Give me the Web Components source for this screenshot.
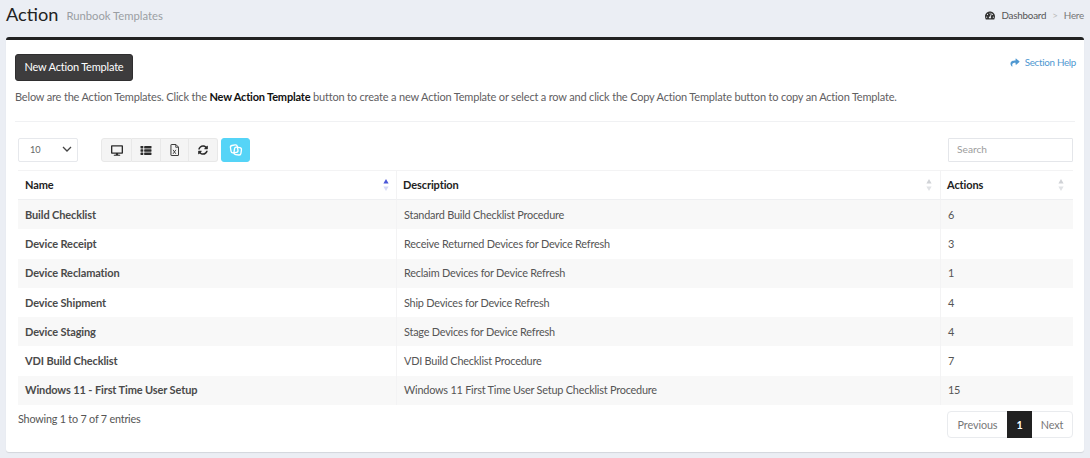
<!DOCTYPE html>
<html lang="en"><head><meta charset="utf-8"><title>Action</title>
<style>
html,body{margin:0;padding:0;height:458px;overflow:hidden}
body{background:#ebeef4;font:11px/17px Lato,"Noto Sans",sans-serif;color:#444}
</style></head><body>
<page-header></page-header>
<app-card>
  <card-intro></card-intro>
  <dt-toolbar></dt-toolbar>
  <data-table></data-table>
  <dt-footer></dt-footer>
</app-card>
<script>
const icons={
 desktop:['0 0 576 512','<path d="M528 0H48C21.5 0 0 21.5 0 48v320c0 26.5 21.5 48 48 48h192l-16 48h-72c-13.3 0-24 10.7-24 24s10.7 24 24 24h272c13.3 0 24-10.7 24-24s-10.7-24-24-24h-72l-16-48h192c26.5 0 48-21.5 48-48V48c0-26.5-21.5-48-48-48zm-16 352H64V64h448v288z"/>'],
 list:['0 0 512 512','<rect x="0" y="50" width="130" height="112" rx="22"/><rect x="170" y="50" width="342" height="112" rx="22"/><rect x="0" y="200" width="130" height="112" rx="22"/><rect x="170" y="200" width="342" height="112" rx="22"/><rect x="0" y="350" width="130" height="112" rx="22"/><rect x="170" y="350" width="342" height="112" rx="22"/>'],
 excel:['0 0 384 512','<path fill="none" stroke="currentColor" stroke-width="40" stroke-linejoin="round" d="M40 40a20 20 0 0 1 20-20h190l114 114v338a20 20 0 0 1-20 20H60a20 20 0 0 1-20-20z"/><path fill="none" stroke="currentColor" stroke-width="34" d="M245 25v115h115"/><path fill="none" stroke="currentColor" stroke-width="36" d="M130 250l120 170M250 250l-120 170"/>'],
 sync:['0 0 512 512','<path d="M370.72 133.28C339.458 104.008 298.888 87.962 255.848 88c-77.458.068-144.328 53.178-162.791 126.85-1.344 5.363-6.122 9.15-11.651 9.15H24.103c-7.498 0-13.194-6.807-11.807-14.176C33.933 94.924 134.813 8 256 8c66.448 0 126.791 26.136 171.315 68.685L463.03 40.97C478.149 25.851 504 36.559 504 57.941V192c0 13.255-10.745 24-24 24H345.941c-21.382 0-32.09-25.851-16.971-40.971l41.75-41.749zM32 296h134.059c21.382 0 32.09 25.851 16.971 40.971l-41.75 41.75c31.262 29.273 71.835 45.319 114.876 45.28 77.418-.07 144.315-53.144 162.787-126.849 1.344-5.363 6.122-9.15 11.651-9.15h57.304c7.498 0 13.194 6.807 11.807 14.176C478.067 417.076 377.187 504 256 504c-66.448 0-126.791-26.136-171.315-68.685L48.97 471.03C33.851 486.149 8 475.441 8 454.059V320c0-13.255 10.745-24 24-24z"/>'],
 copy:['0 0 16 16','<g fill="none" stroke="currentColor" stroke-width="1.5" stroke-linejoin="round"><rect x="2" y="2.5" width="8" height="8.5" rx="2.2" transform="rotate(-10 6 7)"/><rect x="6" y="5" width="8" height="8.5" rx="2.2" transform="rotate(8 10 9)"/></g>'],
 gauge:['0 0 576 512','<path d="M288 32C128.94 32 0 160.94 0 320c0 52.8 14.25 102.26 39.06 144.8 5.61 9.62 16.3 15.2 27.44 15.2h443c11.14 0 21.83-5.58 27.44-15.2C561.75 422.26 576 372.8 576 320c0-159.06-128.94-288-288-288zm0 64c14.71 0 26.58 10.13 30.32 23.65-1.11 2.26-2.64 4.23-3.45 6.67l-9.22 27.67c-5.13 3.49-10.97 6.01-17.64 6.01-17.67 0-32-14.33-32-32S270.33 96 288 96zM96 384c-17.67 0-32-14.33-32-32s14.33-32 32-32 32 14.33 32 32-14.33 32-32 32zm48-160c-17.67 0-32-14.33-32-32s14.33-32 32-32 32 14.33 32 32-14.33 32-32 32zm246.77-72.41l-61.33 184C343.13 347.33 352 364.54 352 384c0 11.72-3.38 22.55-8.88 32H232.88c-5.5-9.45-8.88-20.28-8.88-32 0-33.94 26.5-61.43 59.9-63.59l61.34-184.01c4.17-12.56 17.73-19.45 30.36-15.17 12.57 4.19 19.35 17.79 15.17 30.36zm14.66 57.2l15.52-46.55c3.47-1.29 7.13-2.23 11.05-2.23 17.67 0 32 14.33 32 32s-14.33 32-32 32c-11.38-.01-20.89-6.28-26.57-15.22zM480 384c-17.67 0-32-14.33-32-32s14.33-32 32-32 32 14.33 32 32-14.33 32-32 32z"/>'],
 share:['0 0 512 512','<path d="M503.691 189.836L327.687 37.851C312.281 24.546 288 35.347 288 56.015v80.053C127.371 137.907 0 170.1 0 322.326c0 61.441 39.581 122.309 83.333 154.132 13.653 9.931 33.111-2.533 28.077-18.631C66.066 312.814 132.917 274.316 288 272.085V360c0 20.7 24.3 31.453 39.687 18.164l176.004-152c11.071-9.562 11.086-26.753 0-36.328z"/>']
};
const svg=(n,w,h)=>`<svg xmlns="http://www.w3.org/2000/svg" viewBox="${icons[n][0]}" width="${w}" height="${h}" fill="currentColor" aria-hidden="true">${icons[n][1]}</svg>`;
function el(name,html){customElements.define(name,class extends HTMLElement{constructor(){super();this.attachShadow({mode:'open'}).innerHTML=html}})}

el('page-header',`<style>
:host{display:flex;align-items:center;height:37px;padding:0 6px 7px 6px;box-sizing:border-box}
h1{margin:0 0 3px;font-size:18.2px;font-weight:400;line-height:28px;color:#222}
small{font-size:11.25px;color:#9a9ea3;margin-left:8px}
nav{margin-left:auto;display:flex;align-items:center;font-size:9.8px;letter-spacing:-.2px;color:#555}
svg{margin-right:6px;color:#333}
i{font-style:normal;color:#bbb;margin:0 6px}
span.h{color:#777}
</style><h1>Action</h1><small>Runbook Templates</small><nav>${svg('gauge',10,9)}<span>Dashboard</span><i>&gt;</i><span class="h">Here</span></nav>`);

el('app-card',`<style>
:host{display:block;margin:0 6px;height:415px;box-sizing:border-box;background:#fff;border-top:3px solid #222;border-radius:3px;padding:14px 9px 0;box-shadow:0 1px 1px rgba(0,0,0,.1)}
</style><slot></slot>`);

el('card-intro',`<style>
:host{display:block;border-bottom:1px solid #f0f1f3;height:68px;box-sizing:border-box}
.top{display:flex;align-items:center;justify-content:space-between}
button{font:inherit;font-size:11px;letter-spacing:-.2px;color:#fff;background:#3d3c3d;border:1px solid #2f2e2f;border-radius:3px;height:27px;width:118px;padding:0 0 2px}
a{display:flex;align-items:center;font-size:9.8px;letter-spacing:-.3px;color:#4f98d1;margin:-10px -1px 0 0}
a svg{margin-right:5px}
p{margin:7px 0 0;font-size:11px;letter-spacing:-.18px;line-height:17px;color:#5f6062;white-space:nowrap}
b{color:#111}
</style><div class="top"><button>New Action Template</button><a>${svg('share',10,9)}<span>Section Help</span></a></div>
<p>Below are the Action Templates. Click the <b>New Action Template</b> button to create a new Action Template or select a row and click the Copy Action Template button to copy an Action Template.</p>`);

el('dt-toolbar',`<style>
:host{display:flex;align-items:center;height:24px;margin:16px 2px 0 3px}
.sel{width:60px;height:24px;box-sizing:border-box;border:1px solid #e6e8ec;border-radius:2px;display:flex;align-items:center;justify-content:space-between;padding:0 5px 2px 11px;font-size:9.2px;color:#666}
.grp{display:flex;margin-left:23px}
.b{width:29px;height:24px;box-sizing:border-box;background:#f4f4f4;border:1px solid #e8e8e8;border-left-width:0;display:flex;align-items:center;justify-content:center;color:#2b2b2b}
.b:first-child{border-left-width:1px;border-radius:3px 0 0 3px;width:31px}
.b:nth-child(3){width:28px}
.b:nth-child(4){border-radius:0 3px 3px 0}
.on{background:#55d4f7;border-color:#55d4f7;color:#fff;border-radius:3px;margin-left:3px;width:29px;border-left-width:1px}
.s{margin-left:auto;width:125px;height:24px;box-sizing:border-box;border:1px solid #e4e6ea;font-size:10.2px;color:#9d9d9d;display:flex;align-items:center;padding:0 0 2px 8px;border-radius:1px}
</style><div class="sel"><span>10</span><svg width="10" height="6" viewBox="0 0 10 6"><path d="M1 1l4 4 4-4" fill="none" stroke="#444" stroke-width="1.3"/></svg></div>
<div class="grp"><div class="b">${svg('desktop',12,11)}</div><div class="b">${svg('list',12,11)}</div><div class="b">${svg('excel',9,12)}</div><div class="b">${svg('sync',10,10)}</div><div class="b on">${svg('copy',14,14)}</div></div>
<div class="s">Search</div>`);

const rows=[["Build Checklist","Standard Build Checklist Procedure","6"],["Device Receipt","Receive Returned Devices for Device Refresh","3"],["Device Reclamation","Reclaim Devices for Device Refresh","1"],["Device Shipment","Ship Devices for Device Refresh","4"],["Device Staging","Stage Devices for Device Refresh","4"],["VDI Build Checklist","VDI Build Checklist Procedure","7"],["Windows 11 - First Time User Setup","Windows 11 First Time User Setup Checklist Procedure","15"]];
const sort=(m,up='#d0d2d6',dn='#e0e2e5')=>`<svg style="margin-right:${m}px" width="6" height="12" viewBox="0 0 6 12"><path d="M3 0l2.6 4.6H.4z" fill="${up}"/><path d="M3 12L.4 7.4h5.2z" fill="${dn}"/></svg>`;
el('data-table',`<style>
:host{display:block;margin:8px 2px 0 3px}
.t{display:grid;grid-template-columns:378px 544px 133px;font-size:10.9px;letter-spacing:-.22px;color:#555}
.c{padding:0 7px 1px;height:29.3px;display:flex;align-items:center;box-sizing:border-box;border-left:1px solid #f3f3f4}
.c:nth-child(3n+1){border-left:0}
.h{height:30px;font-size:11px;letter-spacing:-.1px;font-weight:700;color:#222;justify-content:space-between;border-top:1px solid #f3f3f4;border-bottom:1px solid #eeeff1;padding-bottom:2px}
.h:not(:first-child) span{margin-left:-1px}
.h svg{margin-top:2px}
.r{background:#f8f8f8}
.n{font-weight:700;font-size:11px;letter-spacing:-.12px;color:#4a4a4a}
</style><div class="t" role="table">
<div class="c h"><span>Name</span>${sort(0,'#4a57d8','#d5d8f5')}</div><div class="c h"><span>Description</span>${sort(1)}</div><div class="c h"><span>Actions</span>${sort(2)}</div>
${rows.map((r,i)=>`<div class="c n ${i%2?'':'r'}">${r[0]}</div><div class="c ${i%2?'':'r'}">${r[1]}</div><div class="c ${i%2?'':'r'}">${r[2]}</div>`).join('')}
</div>`);

el('dt-footer',`<style>
:host{display:flex;justify-content:space-between;align-items:flex-start;margin:6px 2px 0 3px}
.i{font-size:10.8px;letter-spacing:-.2px;color:#555;margin-top:-1px}
.p{display:flex;height:27px;border:1px solid #e9ebee;border-radius:4px;box-sizing:border-box;font-size:10.8px;letter-spacing:-.1px;color:#777;align-items:center}
.p span{display:flex;align-items:center;justify-content:center;height:27px}
.a{width:59px}.c{width:25px;background:#212121;color:#fff;font-weight:700}.z{width:40px}
</style><div class="i">Showing 1 to 7 of 7 entries</div><div class="p"><span class="a">Previous</span><span class="c">1</span><span class="z">Next</span></div>`);
</script>
</body></html>
